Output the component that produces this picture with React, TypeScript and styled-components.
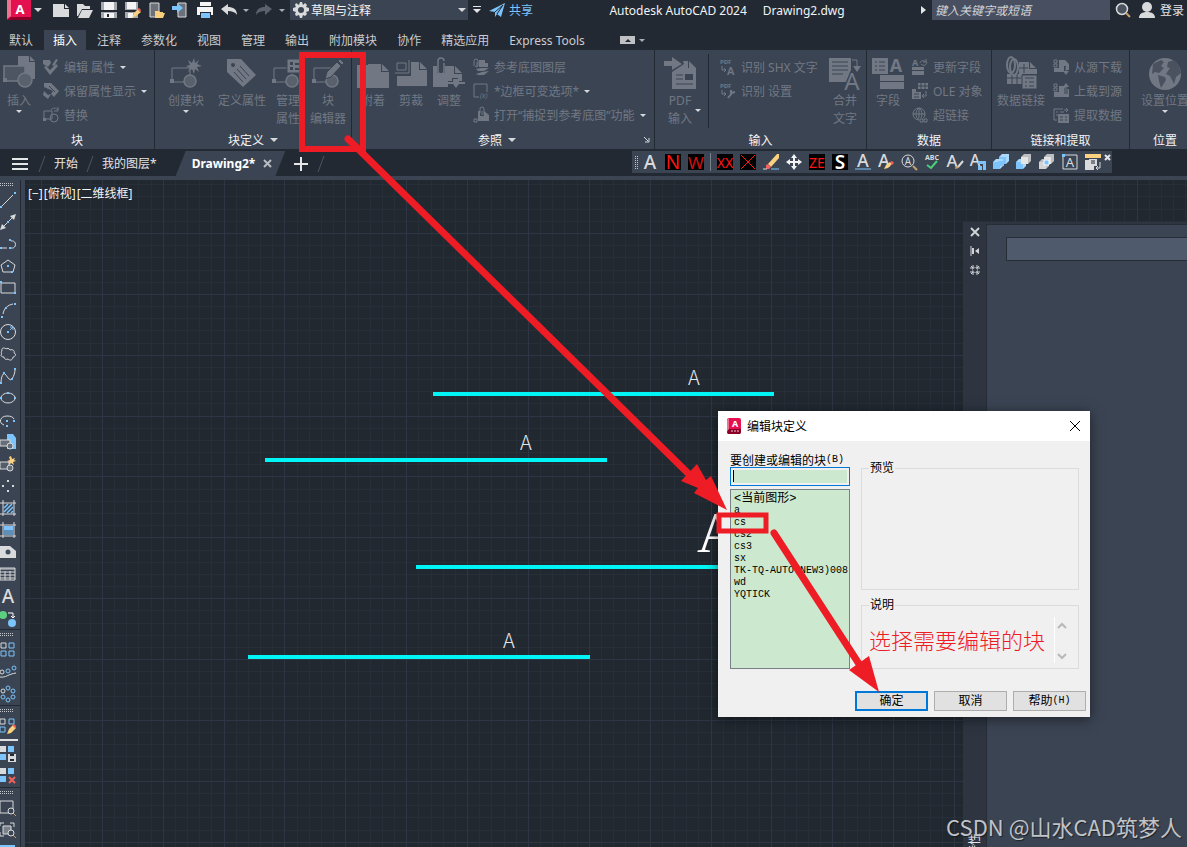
import React from "react";
import styled, { createGlobalStyle } from "styled-components";

const BG = "#222933";
const PANEL = "#3b4453";
const DIM = "#717883";
const LIGHT = "#d9dadb";
const BLUE = "#7cc4fb";
const RED = "#ee1c25";
const UI = `"Noto Sans", "Noto Sans CJK SC", sans-serif`;
const MONO = `"Liberation Mono", "Noto Sans CJK SC", monospace`;

const Global = createGlobalStyle`
  * { box-sizing: border-box; }
  html, body { margin: 0; height: 100%; background: ${BG}; }
  body { font-family: ${UI}; font-size: 12px; color: #e4e6e8; overflow: hidden; }
  button, input, select, textarea { font: inherit; color: inherit; margin: 0; }
  button { background: none; border: 0; padding: 0; white-space: nowrap; }
`;

const Shell = styled.div`
  position: relative;
  display: flex;
  flex-direction: column;
  height: 100vh;
  overflow: hidden;
`;

const Svg = styled.svg`
  display: block;
  flex: none;
  overflow: visible;
`;

const Caret = styled.span<{ $big?: boolean; $light?: boolean }>`
  flex: none;
  width: 0;
  height: 0;
  border-style: solid;
  border-color: ${(p) => (p.$light ? "#d6d8db" : "#a9adb3")} transparent transparent;
  border-width: ${(p) => (p.$big ? "4px 4px 0" : "3px 3px 0")};
`;

/* ---------- title bar ---------- */
const TitleBar = styled.header`
  display: flex;
  align-items: center;
  flex: none;
  height: 20px;
  margin-bottom: 10px;
  padding: 0 3px 0 7px;
`;
const Group = styled.div<{ $gap: number; $ml?: number }>`
  display: flex;
  align-items: center;
  gap: ${(p) => p.$gap}px;
  margin-left: ${(p) => p.$ml ?? 0}px;
`;
const IconButton = styled.button`
  display: flex;
  align-items: center;
  justify-content: center;
  flex: none;
  min-width: 8px;
  height: 20px;
`;
const Workspace = styled.label`
  display: flex;
  align-items: center;
  flex: none;
  width: 178px;
  height: 20px;
  margin-left: 4px;
  padding: 0 2px 0 3px;
  background: ${PANEL};
`;
const WorkspaceSelect = styled.select`
  flex: 1;
  min-width: 0;
  padding: 0 0 0 2px;
  border: 0;
  appearance: none;
  background: transparent;
  color: #f2f3f4;
`;
const Share = styled.button`
  display: flex;
  align-items: center;
  gap: 4px;
  margin-left: 8px;
  color: ${BLUE};
`;
const WindowTitle = styled.h1`
  display: flex;
  gap: 16px;
  margin: 0 auto;
  font-size: 12px;
  font-weight: 400;
  white-space: nowrap;
  color: #f2f3f4;
`;
const Search = styled.input`
  width: 178px;
  height: 20px;
  padding: 0 3px;
  border: 0;
  background: #474f60;
  font-style: italic;
  &::placeholder { color: #d3d6da; opacity: 1; }
`;

/* ---------- ribbon ---------- */
const Tabs = styled.nav`
  display: flex;
  flex: none;
  height: 20px;
`;
const Tab = styled.button<{ $active?: boolean }>`
  margin-right: 2px;
  padding: 0 9px;
  background: ${(p) => (p.$active ? PANEL : "transparent")};
  color: ${(p) => (p.$active ? "#fff" : "#c9ccd0")};
`;
const Ribbon = styled.div`
  display: flex;
  flex: none;
  overflow: hidden;
  background: ${PANEL};
`;
const Panel = styled.section<{ $w: number }>`
  display: flex;
  flex-direction: column;
  flex: none;
  width: ${(p) => p.$w}px;
  border-right: 1px solid ${BG};
  &:last-child { border-right: 0; }
`;
const PanelBody = styled.div<{ $pl?: number }>`
  display: flex;
  height: 80px;
  padding-left: ${(p) => p.$pl ?? 0}px;
  color: ${DIM};
`;
const PanelTitle = styled.div<{ $pr?: number }>`
  position: relative;
  display: flex;
  align-items: center;
  justify-content: center;
  gap: 6px;
  height: 19px;
  padding-right: ${(p) => p.$pr ?? 0}px;
  color: #f2f3f4;
`;
const Launcher = styled.button`
  position: absolute;
  right: 4px;
  top: 7px;
`;
const BigBtn = styled.button<{ $w: number; $ml?: string }>`
  display: flex;
  flex-direction: column;
  align-items: center;
  flex: none;
  width: ${(p) => p.$w}px;
  margin-left: ${(p) => p.$ml ?? "0"};
  padding-top: 6px;
  line-height: 18px;
`;
const BigLabel = styled.span`
  display: flex;
  align-items: center;
  margin-top: 4px;
`;
const SideCaretLabel = styled(BigLabel)`
  gap: 3px;
  padding-left: 9px;
`;
const SmallCol = styled.div<{ $ml: number }>`
  display: flex;
  flex-direction: column;
  align-items: flex-start;
  margin-left: ${(p) => p.$ml}px;
  padding-top: 5px;
`;
const SmallBtn = styled.button`
  display: flex;
  align-items: center;
  gap: 5px;
  height: 24px;
`;
const PanelRule = styled.div`
  width: 1px;
  height: 74px;
  margin: 4px 0 0 3px;
  background: ${BG};
`;

/* ---------- file tabs ---------- */
const FileBar = styled.div`
  display: flex;
  align-items: center;
  flex: none;
  height: 27px;
  padding: 2px 75px 0 12px;
`;
const FileTab = styled.button`
  line-height: 24px;
`;
const ActiveTab = styled.div`
  display: flex;
  align-items: center;
  gap: 8px;
  height: 25px;
  margin-left: 19px;
  padding: 0 13px 0 16px;
  background: ${PANEL};
  clip-path: polygon(10px 0, 100% 0, calc(100% - 10px) 100%, 0 100%);
  font-weight: 700;
  color: #fff;
`;
const TextTools = styled.div`
  display: flex;
  align-items: center;
  gap: 7px;
  height: 22px;
  margin: -3px 0 0 auto;
  padding-left: 3px;
  background: ${PANEL};
`;
const ToolRule = styled.span`
  width: 1px;
  height: 18px;
  margin: 0 -1px;
  background: #7b828d;
`;
const VGrip = styled.span`
  width: 3px;
  height: 13px;
  margin-right: -3px;
  background:
    linear-gradient(transparent 1px, ${PANEL} 1px) 0 0 / 100% 2px,
    linear-gradient(90deg, #c3c6ca 1px, transparent 1px) 0 0 / 2px 100%;
`;
const ToolClose = styled.button`
  width: 7px;
  height: 14px;
  margin-left: -3px;
`;

/* ---------- workspace ---------- */
const Work = styled.main`
  display: flex;
  flex: 1;
  min-height: 0;
  padding-top: 4px;
  background: ${PANEL};
`;
const ToolRail = styled.aside`
  flex: none;
  width: 25px;
  overflow: hidden;
`;
const ToolBlock = styled.div`
  display: flex;
  flex-direction: column;
  align-items: flex-start;
  width: 21px;
  padding-top: 3px;
  border: solid ${BG};
  border-width: 0 1px 1px 0;
`;
const HGrip = styled.span`
  width: 13px;
  height: 3px;
  margin-bottom: 3px;
  background:
    linear-gradient(transparent 1px, ${PANEL} 1px) 0 0 / 100% 2px,
    linear-gradient(90deg, #c3c6ca 1px, transparent 1px) 0 0 / 2px 100%;
`;
const RailBtn = styled.button`
  display: flex;
  align-items: center;
  width: 16px;
  height: 22px;
`;
const RailRule = styled.span`
  width: 18px;
  height: 2px;
  margin: 2px 0;
  background: #e0e0e0;
`;
const Canvas = styled.div`
  position: relative;
  flex: 1;
  min-width: 0;
  overflow: hidden;
  background: #212830;
`;
const Drawing = styled.svg`
  position: absolute;
  inset: 0;
  width: 100%;
  height: 100%;
`;
const ViewControls = styled.div`
  position: absolute;
  left: 3px;
  top: 5px;
  display: flex;
  gap: 1px;
  line-height: 18px;
  color: #f2f3f4;
`;
const Palette = styled.aside`
  position: absolute;
  right: 0;
  top: 42px;
  bottom: 0;
  display: flex;
  width: 224px;
  padding-top: 2px;
  background: #2e3541;
`;
const PaletteBar = styled.div`
  display: flex;
  flex-direction: column;
  align-items: center;
  gap: 9px;
  width: 23px;
  padding-top: 3px;
  overflow: hidden;
`;
const PaletteName = styled.span`
  margin: auto 0 -10px;
  writing-mode: vertical-rl;
  text-orientation: sideways;
  transform: rotate(180deg);
  line-height: 16px;
`;
const PaletteBody = styled.div`
  flex: 1;
  padding: 12px 0 0 19px;
  border: solid #262d37;
  border-width: 1px 0 0 1px;
  border-top-left-radius: 2px;
  background: ${PANEL};
`;
const PaletteInput = styled.input`
  display: block;
  width: 100%;
  height: 24px;
  border: 1px solid #262d37;
  border-right: 0;
  background: #4f5b6d;
`;

/* ---------- dialog ---------- */
const Dialog = styled.div`
  position: absolute;
  left: 718px;
  top: 411px;
  width: 372px;
  background: #f0f0f0;
  color: #000;
  box-shadow: 0 2px 12px rgba(0, 0, 0, 0.5);
`;
const DialogHead = styled.div`
  display: flex;
  align-items: center;
  gap: 6px;
  height: 30px;
  padding: 0 9px;
  background: #fff;
`;
const DialogTitle = styled.h2`
  flex: 1;
  margin: 0;
  font-size: 12px;
  font-weight: 400;
`;
const DialogGrid = styled.form`
  display: grid;
  grid-template-columns: 120px 1fr;
  column-gap: 11px;
  padding: 11px 11px 0 12px;
`;
const Column = styled.div`
  display: flex;
  flex-direction: column;
`;
const FieldLabel = styled.label`
  display: flex;
  align-items: center;
  height: 15px;
  white-space: nowrap;
`;
const Latin = styled.span`
  font-family: ${MONO};
  font-size: 10px;
`;
const NameInput = styled.input`
  height: 19px;
  margin-bottom: 3px;
  padding: 2px;
  border: 1px solid #0078d7;
  background: #fff linear-gradient(#cce8cf, #cce8cf) content-box;
  background-color: #fff;
  outline: 0;
`;
const NameBox = styled.div`
  position: relative;
  display: flex;
  flex-direction: column;
`;
const TextCursor = styled.span`
  position: absolute;
  left: 3px;
  top: 3px;
  width: 1px;
  height: 12px;
  background: #000;
`;
const BlockList = styled.select`
  height: 180px;
  padding: 0;
  border: 1px solid #7a8088;
  border-radius: 0;
  background: #cce8cf;
  font-family: ${MONO};
  font-size: 10px;
  overflow: hidden;
  outline: 0;
`;
const BlockOption = styled.option<{ $first?: boolean }>`
  display: flex;
  align-items: center;
  min-height: 0;
  height: ${(p) => (p.$first ? 14 : 12)}px;
  padding: 0 0 0 3px;
  font-size: ${(p) => (p.$first ? 12 : 10)}px;
  color: #000;
`;
const Frame = styled.fieldset<{ $h: number }>`
  display: flex;
  min-width: 0;
  height: ${(p) => p.$h}px;
  margin: 0;
  padding: 0 7px;
  border: 1px solid #dcdcdc;
`;
const Frames = styled(Column)`
  gap: 7px;
  padding-top: 8px;
`;
const Legend = styled.legend`
  padding: 0 1px;
  line-height: 16px;
`;
const Hint = styled.p`
  flex: 1;
  margin: 13px 0 0;
  font-family: "Noto Sans CJK SC", sans-serif;
  font-weight: 300;
  font-size: 22px;
  line-height: 26px;
  white-space: nowrap;
  color: ${RED};
`;
const Spin = styled.div`
  display: flex;
  flex-direction: column;
  justify-content: space-between;
  height: 46px;
  margin-top: 4px;
  padding: 6px 5px 4px 3px;
  border-left: 1px solid #fff;
`;
const Actions = styled.div`
  display: flex;
  justify-content: flex-end;
  gap: 6px;
  padding: 22px 4px 6px;
`;
const Action = styled.button<{ $primary?: boolean }>`
  display: flex;
  align-items: center;
  justify-content: center;
  width: 73px;
  height: 20px;
  border: ${(p) => (p.$primary ? "2px solid #0078d7" : "1px solid #adadad")};
  background: #e1e1e1;
  line-height: 16px;
`;

const Annotations = styled.svg`
  position: absolute;
  inset: 0;
  width: 100%;
  height: 100%;
  pointer-events: none;
`;
const Watermark = styled.div`
  position: absolute;
  right: 5px;
  bottom: 5px;
  font-family: "Noto Sans CJK SC", sans-serif;
  font-size: 22px;
  line-height: 32px;
  white-space: nowrap;
  color: #c0c3c7;
  text-shadow: 1px 1px 1px rgba(0, 0, 0, 0.5);
`;

/* ---------- drawings ---------- */
const I = ({ s = 16, children }: { s?: number; children: React.ReactNode }) => (
  <Svg width={s} height={s} viewBox={`0 0 ${s} ${s}`} fill="none" aria-hidden="true">
    {children}
  </Svg>
);

const Logo = () => (
  <Svg width="24" height="20" viewBox="0 0 24 20" aria-hidden="true">
    <path d="M0 0h24v20H0z" fill="#e51050" />
    <path d="M0 0h4v16l-4 3z" fill="#f4708f" />
    <path d="M0 20l4-3h20v3z" fill="#8a0029" />
    <text x="13" y="14" textAnchor="middle" fontFamily="Noto Sans, sans-serif" fontWeight="700" fontSize="13" fill="#fff">A</text>
  </Svg>
);
const DialogLogo = () => (
  <Svg width="14" height="16" viewBox="0 0 14 16" aria-hidden="true">
    <rect width="14" height="16" rx="2" fill="#e51050" />
    <path d="M0 2l2-2v11l-2 3z" fill="#f4708f" />
    <path d="M0 14l2-3h12v3l-1 2H1z" fill="#8a0029" />
    <text x="8" y="9" textAnchor="middle" fontFamily="Noto Sans, sans-serif" fontWeight="700" fontSize="9" fill="#fff">A</text>
    <path d="M4 13h2M7 13h2M10 13h2" stroke="#f3c9d4" />
  </Svg>
);

const shapes = (
  <>
    <path d="M2 12h18v14H2z" stroke={DIM} />
    <path d="M0 23h4v4H0z" fill={DIM} />
    <circle cx="20" cy="25" r="6" stroke={DIM} strokeWidth="1.500" fill="#59616d" />
  </>
);

const big = {
  insert: (
    <I s={32}>
      <path d="M15 0h11v6h6v17H15z" fill={DIM} />
      <path d="M27 0l5 5h-5z" fill={DIM} />
      <path d="M1 10h21v15H1z" stroke={DIM} strokeWidth="1.500" fill="#4d5562" />
      <path d="M0 22h4v4H0z" fill={DIM} />
      <circle cx="22" cy="24" r="7" stroke={DIM} strokeWidth="1.500" fill="#59616d" />
    </I>
  ),
  create: (
    <I s={32}>
      {shapes}
      <path d="M24 2l1 5 4-3-2 4 5 2-5 1 2 5-4-3-1 5-2-5-4 3 2-4-4-2 4-1-2-5 4 3z" fill={DIM} />
    </I>
  ),
  tag: (
    <I s={32}>
      <path d="M1 3h14l15 16-13 12L1 16z" fill={DIM} />
      <circle cx="7" cy="9" r="2" fill={PANEL} />
      <path d="M14 10l9 10M11 13l9 10M8 16l9 10" stroke={PANEL} />
    </I>
  ),
  manage: (
    <I s={32}>
      {shapes}
      <path d="M15 3h17v14H15z" fill={DIM} stroke={PANEL} />
      <path d="M18 6h3v3h-3zM23 7h7v2h-7zM18 11h3v3h-3zM23 12h7v2h-7z" fill={PANEL} />
    </I>
  ),
  editor: (
    <I s={32}>
      {shapes}
      <path d="M13 23l2-7L25 6l4 4-10 11zM26 5l2-2 4 4-2 2z" fill={DIM} stroke={PANEL} />
    </I>
  ),
  attach: (
    <I s={32}>
      <path d="M0 9h11V8h13v8h8v16H0zM25 8l7 7h-7z" fill={DIM} />
    </I>
  ),
  clip: (
    <I s={32}>
      <path d="M16 6h8v8h8v16H2V20h14zM25 6l7 7h-7z" fill={DIM} />
      <path d="M0 17h14V4M2 14V7h9v7z" stroke={DIM} />
    </I>
  ),
  adjust: (
    <I s={32}>
      <path d="M0 10h4v7h8v-7h9v8h8v7h-4v-3h-6v3h-4v6H0zM22 10l7 7h-7z" fill={DIM} />
      <path d="M11 7v8a3 3 0 01-6 0V5a3 3 0 016 0" stroke={DIM} strokeWidth="1.500" />
      <path d="M14 27h18" stroke={DIM} strokeWidth="2" />
      <path d="M20 23h6v5l-3 4-3-4z" fill={DIM} />
    </I>
  ),
  pdf: (
    <I s={32}>
      <path d="M0 5h8V1l10 7-10 6v-4H0z" fill={DIM} />
      <path d="M8 33V16l12-8-1-3h5v7h8v21zM25 5l7 7h-7z" fill={DIM} />
      <path d="M12 19h7M12 23h7M12 28h17" stroke={PANEL} />
      <path d="M21 18h8v6h-8z" fill={PANEL} />
    </I>
  ),
  combine: (
    <I s={32}>
      <path d="M0 2h22v12l-5 12H0z" fill={DIM} />
      <path d="M3 6h16M3 10h16M3 14h16M3 18h11" stroke={PANEL} />
      <path d="M23 4h5v7" stroke={DIM} />
      <path d="M24 10h8l-4 6z" fill={DIM} />
      <text x="23" y="34" textAnchor="middle" fontFamily="Noto Sans, sans-serif" fontSize="24" fill={DIM} stroke={PANEL} strokeWidth="2" paintOrder="stroke">A</text>
    </I>
  ),
  field: (
    <I s={32}>
      <path d="M0 2h16v16H0zM8 19h24v6H8zM8 26h24v7H8z" fill={DIM} />
      <path d="M3 6h2M7 6h6M3 10h2M7 10h6M3 14h2M7 14h6" stroke={PANEL} />
      <text x="24" y="16" textAnchor="middle" fontFamily="Noto Sans, sans-serif" fontWeight="700" fontSize="18" fill={DIM}>A</text>
    </I>
  ),
  link: (
    <I s={32}>
      <path d="M2 18h12V6h10v7h8v5H17v10H2zM25 6l6 6h-6z" fill={DIM} />
      <path d="M2 22h14M7 18v10M12 18v10M19 8v9M14 12h9" stroke={PANEL} />
      <path d="M17 19h15v14H17z" fill={DIM} stroke={PANEL} />
      <path d="M20 22h9M20 26h2M24 26h5M20 30h2M24 30h5" stroke={PANEL} />
      <ellipse cx="6" cy="9" rx="4" ry="8" stroke={DIM} strokeWidth="2" />
      <ellipse cx="9" cy="11" rx="4" ry="8" stroke={DIM} strokeWidth="2" />
    </I>
  ),
  globe: (
    <I s={32}>
      <circle cx="16" cy="18" r="16" fill={DIM} />
      <path d="M4 8l8-4 3 2-3 4 3 2-5 5-4-1-3 2zM9 19l7 2 1 3-5 8-2-7zM19 6l6-2 5 6 2 7-5 4-2 7-4-8-4-2 4-6-3-1z" fill="#4a5260" />
    </I>
  ),
};

const sm = {
  editAttr: (
    <I>
      <path d="M0 1h7l1 3-3 4-5-3z" fill={DIM} />
      <path d="M1 8l2-1 4 4 6-6 2 2-8 9zM9 6l4-6 2 1-4 6z" fill={DIM} />
    </I>
  ),
  keepAttr: (
    <I>
      <path d="M1 0h7l8 8-5 6-3-3 2-3-9-4zM1 8l4 4 3-1-3 5-5-4z" fill={DIM} />
      <path d="M6 3l6 6" stroke={PANEL} />
    </I>
  ),
  replace: (
    <I>
      <path d="M1 4h8v8H1zM8 3c2-3 5-2 7 0M15 0v4h-4" stroke={DIM} />
      <circle cx="11" cy="11" r="4" stroke={DIM} />
      <path d="M0 11h3v3H0z" fill={DIM} />
    </I>
  ),
  layers: (
    <I>
      <path d="M6 1h6v3h3v4H6zM3 10l5-1h8l-5 3H5zM3 15l6-2 7-1-5 4H5z" fill={DIM} />
      <path d="M4 3v5M1 7V2a2 2 0 014 0v5a2 2 0 01-3 0" stroke={DIM} />
    </I>
  ),
  frame: (
    <I>
      <path d="M6 14H1V1h13v8" stroke={DIM} />
      <text x="7" y="15" fontFamily="Noto Sans, sans-serif" fontStyle="italic" fontSize="7" fill={DIM}>(x)</text>
    </I>
  ),
  snap: (
    <I>
      <path d="M5 4h2v5h4V4l5 4v6H5z" fill={DIM} />
      <path d="M9 4v4M7 6V2a2 2 0 014 0v6M1 12h3v3H1z" stroke={DIM} />
    </I>
  ),
  shx: (
    <I>
      <text x="0" y="5" fontFamily="Noto Sans, sans-serif" fontWeight="700" fontSize="6" fill={DIM}>PDF</text>
      <path d="M2 7v4h4M4 9l2 2-2 2" stroke={DIM} />
      <text x="7" y="16" fontFamily="Noto Sans, sans-serif" fontWeight="600" fontSize="11" fill={DIM}>A</text>
    </I>
  ),
  shxSet: (
    <I>
      <text x="0" y="5" fontFamily="Noto Sans, sans-serif" fontWeight="700" fontSize="6" fill={DIM}>PDF</text>
      <path d="M2 7v4h4M4 9l2 2-2 2" stroke={DIM} />
      <path d="M8 15l4-5M11 7v3l4-1" stroke={DIM} strokeWidth="2" />
    </I>
  ),
  updField: (
    <I>
      <text x="0" y="7" fontFamily="Noto Sans, sans-serif" fontWeight="700" fontSize="9" fill={DIM}>A</text>
      <path d="M8 4c1-3 4-3 6-1M15 3c-1 4-4 4-6 2M14 0v3h-3" stroke={DIM} />
      <path d="M0 8h12v3H0zM0 12h12v4H0z" fill={DIM} />
    </I>
  ),
  ole: (
    <I>
      <path d="M6 0h10v6H6zM0 6h4v3h5v7H0z" fill={DIM} />
      <path d="M6 3h10M9 0v6M13 0v6M2 11h5M2 14h5" stroke={PANEL} />
      <path d="M14 8v5h-4M12 11l-2 2 2 2" stroke={DIM} />
    </I>
  ),
  hyper: (
    <I>
      <circle cx="7" cy="7" r="6" stroke={DIM} />
      <path d="M1 7h12M7 1v12M7 1C3 4 3 10 7 13M7 1c4 3 4 9 0 12" stroke={DIM} />
      <path d="M7 11h9v4H7z" fill={PANEL} />
      <path d="M8 12h3v3H8zM12 12h3v3h-3z" stroke={DIM} />
    </I>
  ),
  down: (
    <I>
      <path d="M6 1h6l4 4v6h-3V7h-2v6H1V9h5z" fill={DIM} />
      <path d="M1 1h3v3H1zM1 5h3v3H1zM13 8v5" stroke={DIM} />
      <path d="M10 12h6l-3 4z" fill={DIM} />
    </I>
  ),
  up: (
    <I>
      <path d="M6 3h6v3h4v8H1V9h5z" fill={DIM} />
      <path d="M1 1h3v3H1zM1 5h3v3H1z" stroke={DIM} />
      <path d="M13 11V5" stroke={PANEL} strokeWidth="3" />
      <path d="M13 11V4" stroke={DIM} />
      <path d="M10 4h6l-3-4z" fill={DIM} />
    </I>
  ),
  extract: (
    <I>
      <path d="M10 2H1v11h3M3 5h2M7 5h4M3 8h2M11 3h4M13 1l2 2-2 2" stroke={DIM} />
      <path d="M5 7h11v9H5z" fill={DIM} />
      <path d="M7 10h3M12 10h2M7 13h3M12 13h2" stroke={PANEL} />
    </I>
  ),
};

const qat = {
  new: <I><path d="M0 2h11v5h5v8H0zM12 2l4 4h-4z" fill={LIGHT} /></I>,
  open: <I><path d="M0 2h6l2 2h5v3H5L1 14H0zM5 8h11l-4 8H1z" fill={LIGHT} /></I>,
  save: (
    <I>
      <path d="M0 0h16v16H0z" fill="#a6a9ad" />
      <path d="M3 0h10v8H3zM3 11h10v5H3z" fill="#f4f4f4" />
      <path d="M0 9h16M7 12v3" stroke={BG} strokeWidth="2" />
    </I>
  ),
  saveAs: (
    <I>
      <path d="M0 0h13v16H0z" fill="#a6a9ad" />
      <path d="M2 0h9v7H2zM3 11h5v5H3z" fill="#f4f4f4" />
      <path d="M0 9h12" stroke={BG} strokeWidth="2" />
      <path d="M7 16l2-5 4-4 3 3-5 4z" fill="#fbd180" />
      <path d="M12 7l2-1 2 2-1 2z" fill="#f0625b" />
    </I>
  ),
  mobOpen: (
    <I>
      <path d="M1 1h9v14H1z" stroke={LIGHT} fill="#6c7078" />
      <path d="M6 9h4l1 1h3v1h2l-2 5H6z" fill="#f9cf7e" />
    </I>
  ),
  mobSave: (
    <I>
      <path d="M5 1h8v14H5z" stroke={LIGHT} fill="#6c7078" />
      <path d="M-1 4h5V1l6 5-6 5V8h-5z" fill={BLUE} />
    </I>
  ),
  print: (
    <I>
      <path d="M3 0h11v4H3zM0 5h16v8h-2v-3H3v3H0z" fill="#f4f4f4" />
      <path d="M4 11h9v5H4z" fill={BLUE} />
    </I>
  ),
  undo: <I><path d="M0 7l7-5v3c5 0 9 2 9 8-2-3-5-4-9-4v4z" fill={LIGHT} /></I>,
  redo: <I><path d="M16 7L9 2v3C4 5 0 7 0 13c2-3 5-4 9-4v4z" fill="#5b626d" /></I>,
};

const gear = (
  <I>
    <path d="M7 0h2l1 3 2-2 2 2-1 2 3 1v3l-3 1 1 2-2 2-2-1-1 3H7l-1-3-3 1-1-2 1-2-3-1V6l3-1-1-2 1-2 3 2z" fill={LIGHT} />
    <circle cx="8" cy="8" r="3" fill={PANEL} />
  </I>
);

type GlyphProps = { t: string; bg?: string; c?: string; size?: number; w?: number; y?: number; x?: number };
const Glyph = ({ t, bg, c = LIGHT, size = 19, w = 400, y = 15, x = 8 }: GlyphProps) => (
  <>
    {bg && <path d="M0 0h16v16H0z" fill={bg} />}
    <text x={x} y={y} textAnchor="middle" fontFamily="Noto Sans, sans-serif" fontWeight={w} fontSize={size} fill={c}>{t}</text>
  </>
);

const cube = (x: number, y: number, f: string, top: string) => (
  <>
    <path d={`M${x} ${y + 3}l3-3h7v7l-3 3h-7z`} fill={top} />
    <path d={`M${x} ${y + 3}h7v7h-7z`} fill={f} />
  </>
);

const textTools: [string, React.ReactNode][] = [
  ["多行文字", <Glyph t="A" w={500} size={19} />],
  ["N", <Glyph t="N" bg="#000" c="#ff1414" size={19} />],
  ["W", <Glyph t="W" bg="#000" c="#d01010" size={17} />],
  ["|", null],
  ["XX", <Glyph t="XX" bg="#000" c="#ff1414" size={14} y={14} />],
  ["X", <><path d="M0 0h16v16H0z" fill="#000" /><path d="M1 1l14 14M15 1L1 15" stroke="#ff1414" /></>],
  ["删除", <><path d="M5 10L14 0h2v4l-8 9z" fill="#fbd180" /><path d="M3 11l2-1 3 3-2 2H3z" fill="#f0625b" /><path d="M0 15h4" stroke={LIGHT} /><path d="M8 15h8" stroke={BLUE} /></>],
  ["移动", <path d="M8 0l3 4H9v3h3V5l4 3-4 3V9H9v3h2l-3 4-3-4h2V9H4v2L0 8l4-3v2h3V4H5z" fill="#f4f4f4" />],
  ["ZE", <Glyph t="ZE" bg="#000" c="#ff1414" size={14} y={14} />],
  ["S", <Glyph t="S" bg="#000" c="#fff" w={600} size={19} />],
  ["文字下划线", <><Glyph t="A" w={500} size={18} y={13} /><path d="M0 15h16" stroke={BLUE} /></>],
  ["编辑文字", <><Glyph t="A" w={500} size={18} y={13} x={6} /><path d="M6 15l2-4 4-3 2 2-4 4z" fill="#fbd180" /><path d="M12 8l2-1 2 2-2 2z" fill="#f0625b" /></>],
  ["查找文字", <><circle cx="7" cy="7" r="6" stroke={LIGHT} /><Glyph t="A" size={10} y={11} x={7} /><path d="M12 12l4 4" stroke="#c8a06a" strokeWidth="2" /></>],
  ["拼写检查", <><Glyph t="ABC" w={700} size={7} y={6} /><path d="M3 11l4 3 6-7" stroke="#46d27c" strokeWidth="2" /></>],
  ["文字样式", <><Glyph t="A" w={500} size={17} y={13} x={5} /><path d="M16 7l-5 6" stroke={LIGHT} strokeWidth="2" /><path d="M8 15c0-2 1-3 3-3l1 2z" fill="#c8a06a" /></>],
  ["缩放文字", <><Glyph t="A" w={500} size={16} y={12} x={5} /><path d="M8 7h8v9h-3v-6H8zM8 12h4v4H8z" fill={BLUE} /></>],
  ["并集", <>{cube(6, 0, BLUE, "#a9d8fb")}{cube(0, 5, BLUE, "#a9d8fb")}<path d="M5 7h6v5H5z" fill={BLUE} /></>],
  ["差集", <>{cube(0, 5, BLUE, "#a9d8fb")}{cube(5, 0, "#e4e4e4", "#bcbec1")}</>],
  ["交集", <>{cube(5, 0, "#e4e4e4", "#bcbec1")}{cube(0, 5, "#d4d4d4", "#bcbec1")}<path d="M5 6h5v5H5z" fill={BLUE} stroke="#fff" /></>],
  ["文字框", <><path d="M1 1h14v14H1z" stroke={LIGHT} /><path d="M0 0h3v3H0z" fill={BLUE} /><Glyph t="A" size={13} y={13} /></>],
  ["测量", <><path d="M0 0h16v4H0z" fill="#fbd180" /><path d="M0 6h4v10H0zM4 5h8v7H4zM1 12h8v4H1z" fill={LIGHT} /><path d="M6 7h4M6 9h4" stroke="#222933" /><path d="M15 8v6h-4M13 12l-2 2 2 2" stroke={LIGHT} /></>],
];

const dot = (x: number, y: number) => <path d={`M${x} ${y}h2v2h-2z`} fill={BLUE} />;
const ring = (x: number, y: number, c = BLUE) => <circle cx={x} cy={y} r="2" stroke={c} />;

const rail1: [string, React.ReactNode][] = [
  ["直线", <><path d="M2 14L13 3" stroke={LIGHT} />{dot(0, 14)}{dot(14, 0)}</>],
  ["构造线", <><path d="M3 13L13 3" stroke={LIGHT} /><path d="M10 2l6-2-2 6zM6 14l-6 2 2-6z" fill={LIGHT} />{dot(7, 7)}</>],
  ["多段线", <><path d="M2 12h5M11 12c6 1 6-8 0-7" stroke={LIGHT} />{dot(0, 11)}{dot(9, 11)}{dot(9, 3)}</>],
  ["多边形", <><path d="M8 2l7 5-2 7H3L1 7z" stroke={LIGHT} />{dot(7, 7)}{dot(11, 13)}</>],
  ["矩形", <><path d="M1 3h14v10H1z" stroke={LIGHT} />{dot(0, 1)}{dot(14, 12)}</>],
  ["圆弧", <><path d="M3 12C4 6 8 3 13 2" stroke={LIGHT} />{dot(1, 14)}{dot(5, 5)}{dot(14, 1)}</>],
  ["圆", <><circle cx="8" cy="8" r="7.500" stroke={LIGHT} /><path d="M10 6l3-3M10 3h3v3" stroke={BLUE} />{dot(7, 7)}</>],
  ["修订云线", <path d="M2 5c-1-3 2-4 4-2 1-1 3-1 4 1 3-1 5 1 4 3 3 1 1 4-1 4 0 3-3 4-5 2-2 1-4 0-4-2-3 0-4-2-2-3-1-1-1-2 0-3z" stroke={LIGHT} />],
  ["样条曲线", <><path d="M1 14C1 10 3 4 5 6s5 8 7 5 3-7 3-9" stroke={LIGHT} />{dot(0, 14)}{dot(3, 4)}{dot(11, 10)}{dot(14, 0)}</>],
  ["椭圆", <><ellipse cx="8" cy="8" rx="7" ry="5" stroke={LIGHT} />{dot(0, 7)}{dot(7, 2)}{dot(14, 7)}</>],
  ["椭圆弧", <><path d="M4 13C-2 11 0 4 7 4c4 0 6 1 7 3" stroke={LIGHT} />{dot(6, 8)}{dot(13, 8)}{dot(6, 13)}</>],
  ["插入块", <><path d="M7 0h6l3 4v11H7z" fill={BLUE} /><path d="M0 6h10v6H0z" stroke={LIGHT} fill="#666e79" /><circle cx="10" cy="12" r="3" stroke={LIGHT} fill="#666e79" /></>],
  ["创建块", <><path d="M0 6h9v7H0z" stroke={LIGHT} fill="#555d69" /><circle cx="10" cy="12" r="3" stroke={LIGHT} fill="#666e79" /><path d="M11 0l1 3 3-1-1 2 2 1-3 1 1 3-3-2-2 2v-3L7 5l3-1-1-3z" fill="#fbd180" /></>],
  ["点", <path d="M7 2h2v2H7zM2 7h2v2H2zM12 7h2v2h-2zM7 12h2v2H7z" fill={LIGHT} />],
  ["图案填充", <><path d="M3 0v16M14 0v16M0 3h16M0 14h16" stroke={LIGHT} /><path d="M4 8l4-4M4 12l8-8M7 13l6-6M11 13l2-2" stroke={BLUE} strokeWidth="1.500" /></>],
  ["渐变色", <><path d="M4 4h9v9H4z" fill="#5e8fb8" /><path d="M4 4h9v4H4z" fill={BLUE} /><path d="M3 0v16M14 0v16M0 3h16M0 14h16" stroke={LIGHT} /></>],
  ["面域", <><path d="M0 2h10l6 5v7H0z" fill={LIGHT} /><circle cx="8" cy="8" r="2.500" fill="#3c4c60" /></>],
  ["表格", <path d="M0 2h15v12H0zM0 6h15M0 9h15M0 12h15M5 5v9M10 5v9M0 3h15" stroke={LIGHT} />],
  ["文字", <Glyph t="A" w={500} size={19} />],
  ["添加选定对象", <><circle cx="3" cy="5" r="4" fill="#5bd07f" /><circle cx="12" cy="13" r="4" fill={BLUE} /><path d="M8 3h5v5M11 6l2 2 2-2" stroke="#fff" /></>],
];
const rail2: [string, React.ReactNode][] = [
  ["矩形阵列", <><path d="M1 1h5v5H1z" stroke={LIGHT} /><path d="M9 1h5v5H9zM1 9h5v5H1zM9 9h5v5H9z" stroke={BLUE} /></>],
  ["路径阵列", <><path d="M0 13c6 1 8-3 16-4" stroke={LIGHT} />{ring(2, 8, LIGHT)}{ring(8, 7)}{ring(14, 4)}</>],
  ["环形阵列", <>{ring(8, 2)}{ring(13, 5)}{ring(13, 11)}{ring(8, 14)}{ring(3, 11)}{ring(3, 5, LIGHT)}</>],
];
const rail3: [string, React.ReactNode][] = [
  ["编辑阵列", <><path d="M0 1h5v5H0z" stroke={LIGHT} /><path d="M9 1h5v5H9zM0 9h5v5H0z" stroke={BLUE} /><path d="M7 16l2-5 4-4 3 3-5 5z" fill="#fbd180" /><path d="M12 7l2-1 2 2-1 2z" fill="#f0625b" /></>],
  ["|", null],
  ["保存阵列", <><path d="M0 0h6v6H0z" fill={LIGHT} /><path d="M8 0h6v6H8zM0 8h6v6H0z" fill={BLUE} /><path d="M8 8h8v8H8z" fill={LIGHT} /><path d="M10 9h4M10 14h4" stroke="#222933" strokeWidth="2" /></>],
  ["关闭阵列", <><path d="M0 0h6v6H0z" fill={LIGHT} /><path d="M8 0h6v6H8zM0 8h6v6H0z" fill={BLUE} /><path d="M9 9l6 6M15 9l-6 6" stroke="#f0625b" strokeWidth="2" /></>],
];
const rail4: [string, React.ReactNode][] = [
  ["窗口缩放", <><path d="M0 1h13v12H0z" stroke={LIGHT} /><circle cx="11" cy="11" r="3" stroke={LIGHT} fill={PANEL} /><path d="M13 13l3 3" stroke="#c8a06a" /></>],
  ["范围缩放", <><path d="M0 4V1h4M10 1h4v4M0 10v4h4" stroke={LIGHT} /><path d="M3 4h8v8H3z" stroke={LIGHT} fill="#7b818a" /><circle cx="11" cy="11" r="3" stroke={LIGHT} fill={PANEL} /><path d="M13 13l3 3" stroke="#c8a06a" /></>],
  ["缩放", <path d="M1 2h13v12H1z" stroke={BLUE} strokeWidth="2" />],
];

const Rail = ({ items }: { items: [string, React.ReactNode][] }) => (
  <ToolBlock>
    <HGrip />
    {items.map(([name, art]) =>
      art ? (
        <RailBtn key={name} aria-label={name}><I>{art}</I></RailBtn>
      ) : (
        <RailRule key={name} />
      ),
    )}
  </ToolBlock>
);

type BigProps = { icon: React.ReactNode; lines: string[]; w: number; ml?: string; caret?: boolean };
const Big = ({ icon, lines, w, ml, caret }: BigProps) => (
  <BigBtn $w={w} $ml={ml}>
    {icon}
    <BigLabel>
      <span>{lines.map((l, i) => <React.Fragment key={l}>{i > 0 && <br />}{l}</React.Fragment>)}</span>
    </BigLabel>
    {caret && <Caret $light />}
  </BigBtn>
);
const Small = ({ icon, label, caret }: { icon: React.ReactNode; label: string; caret?: boolean }) => (
  <SmallBtn>{icon}<span>{label}</span>{caret && <Caret $light />}</SmallBtn>
);
const Slash = () => (
  <Svg width="8" height="16" viewBox="0 0 8 16" aria-hidden="true"><path d="M1 16L7 0" stroke="#4d5563" /></Svg>
);

const MAJOR = 60.87;
const grid = (minor: boolean) => {
  const step = minor ? MAJOR / 5 : MAJOR;
  let d = "";
  for (let i = 0; i < (minor ? 240 : 48); i++) {
    const x = Math.round(16 - MAJOR + i * step);
    const y = Math.round(53 - MAJOR + i * step);
    d += `M${x} 0h1v3000h-1zM0 ${y}h3000v1H0z`;
  }
  return d;
};

const tabs = ["默认", "插入", "注释", "参数化", "视图", "管理", "输出", "附加模块", "协作", "精选应用", "Express Tools"];
const blocks = ["<当前图形>", "a", "cs", "cs2", "cs3", "sx", "TK-TQ-AUTO(NEW3)008", "wd", "YQTICK"];
const names = ["新建", "打开", "保存", "另存为", "从移动设备打开", "保存到移动设备", "打印", "放弃"];
const qatIcons = [qat.new, qat.open, qat.save, qat.saveAs, qat.mobOpen, qat.mobSave, qat.print, qat.undo];

export default function App() {
  return (
    <Shell>
      <Global />
      <TitleBar>
        <Logo />
        <Group $gap={0} $ml={3}><IconButton aria-label="应用程序菜单"><Caret $big $light /></IconButton></Group>
        <Group $gap={8} $ml={11}>
          {qatIcons.map((ic, i) => <IconButton key={names[i]} aria-label={names[i]}>{ic}</IconButton>)}
        </Group>
        <Group $gap={6} $ml={5}>
          <IconButton aria-label="放弃列表"><Caret /></IconButton>
          <IconButton aria-label="重做">{qat.redo}</IconButton>
          <IconButton aria-label="重做列表"><Caret /></IconButton>
        </Group>
        <Workspace>
          {gear}
          <WorkspaceSelect aria-label="工作空间"><option>草图与注释</option></WorkspaceSelect>
          <Caret $big $light />
        </Workspace>
        <Group $gap={0} $ml={5}>
          <IconButton aria-label="自定义快速访问工具栏">
            <Svg width="8" height="8" viewBox="0 0 8 8"><path d="M0 0h8v1H0zM0 3h8L4 7z" fill="#e4e6e8" /></Svg>
          </IconButton>
        </Group>
        <Share>
          <I><path d="M0 9L16 1l-4 14-4-3-2 3v-5z" fill={BLUE} /><path d="M6 10l8-7-6 9" stroke={BG} /></I>
          共享
        </Share>
        <WindowTitle><span>Autodesk AutoCAD 2024</span><span>Drawing2.dwg</span></WindowTitle>
        <Svg width="5" height="8" viewBox="0 0 5 8"><path d="M0 0l5 4-5 4z" fill="#e4e6e8" /></Svg>
        <Group $gap={5} $ml={6}>
          <Search aria-label="搜索" placeholder="键入关键字或短语" />
          <IconButton aria-label="开始搜索">
            <I><circle cx="7" cy="7" r="5.500" stroke={LIGHT} strokeWidth="1.500" fill="#4b535f" /><path d="M11 11l4 4" stroke="#c8a06a" strokeWidth="2" /></I>
          </IconButton>
        </Group>
        <Group $gap={5} $ml={8}>
          <I><circle cx="8" cy="5" r="5" fill={LIGHT} /><path d="M0 16c0-4 3-6 8-6s8 2 8 6z" fill={LIGHT} /></I>
          <IconButton>登录</IconButton>
        </Group>
      </TitleBar>

      <Tabs>
        {tabs.map((t) => <Tab key={t} $active={t === "插入"}>{t}</Tab>)}
        <Group $gap={4} $ml={24}>
          <IconButton aria-label="最小化功能区">
            <Svg width="15" height="8" viewBox="0 0 15 8"><path d="M0 0h15v8H0z" fill="#bfc1c4" /><path d="M5 6l3-3 3 3z" fill={BG} /></Svg>
          </IconButton>
          <Caret />
        </Group>
      </Tabs>

      <Ribbon>
        <Panel $w={155}>
          <PanelBody>
            <Big icon={big.insert} lines={["插入"]} w={38} caret />
            <SmallCol $ml={5}>
              <Small icon={sm.editAttr} label="编辑 属性" caret />
              <Small icon={sm.keepAttr} label="保留属性显示" caret />
              <Small icon={sm.replace} label="替换" />
            </SmallCol>
          </PanelBody>
          <PanelTitle>块</PanelTitle>
        </Panel>
        <Panel $w={197}>
          <PanelBody $pl={5}>
            <Big icon={big.create} lines={["创建块"]} w={52} caret />
            <Big icon={big.tag} lines={["定义属性"]} w={60} />
            <Big icon={big.manage} lines={["管理", "属性"]} w={32} />
            <Big icon={big.editor} lines={["块", "编辑器"]} w={40} ml="4px" />
          </PanelBody>
          <PanelTitle>块定义<Caret $big $light /></PanelTitle>
        </Panel>
        <Panel $w={303}>
          <PanelBody $pl={2}>
            <Big icon={big.attach} lines={["附着"]} w={38} />
            <Big icon={big.clip} lines={["剪裁"]} w={38} />
            <Big icon={big.adjust} lines={["调整"]} w={38} />
            <SmallCol $ml={5}>
              <Small icon={sm.layers} label="参考底图图层" />
              <Small icon={sm.frame} label="*边框可变选项*" caret />
              <Small icon={sm.snap} label="打开“捕捉到参考底图”功能" caret />
            </SmallCol>
          </PanelBody>
          <PanelTitle $pr={12}>
            参照<Caret $big $light />
            <Launcher aria-label="外部参照">
              <Svg width="6" height="6" viewBox="0 0 6 6"><path d="M0 0l4 4M5 1v4H1" stroke={LIGHT} fill="none" /></Svg>
            </Launcher>
          </PanelTitle>
        </Panel>
        <Panel $w={212}>
          <PanelBody>
            <BigBtn $w={50}>
              {big.pdf}
              <SideCaretLabel><span>PDF<br />输入</span><Caret $light /></SideCaretLabel>
            </BigBtn>
            <PanelRule />
            <SmallCol $ml={11}>
              <Small icon={sm.shx} label="识别 SHX 文字" />
              <Small icon={sm.shxSet} label="识别 设置" />
            </SmallCol>
            <Big icon={big.combine} lines={["合并", "文字"]} w={42} ml="auto" />
          </PanelBody>
          <PanelTitle>输入</PanelTitle>
        </Panel>
        <Panel $w={125}>
          <PanelBody>
            <Big icon={big.field} lines={["字段"]} w={42} />
            <SmallCol $ml={3}>
              <Small icon={sm.updField} label="更新字段" />
              <Small icon={sm.ole} label="OLE 对象" />
              <Small icon={sm.hyper} label="超链接" />
            </SmallCol>
          </PanelBody>
          <PanelTitle>数据</PanelTitle>
        </Panel>
        <Panel $w={138}>
          <PanelBody>
            <Big icon={big.link} lines={["数据链接"]} w={58} />
            <SmallCol $ml={3}>
              <Small icon={sm.down} label="从源下载" />
              <Small icon={sm.up} label="上载到源" />
              <Small icon={sm.extract} label="提取数据" />
            </SmallCol>
          </PanelBody>
          <PanelTitle>链接和提取</PanelTitle>
        </Panel>
        <Panel $w={70}>
          <PanelBody><Big icon={big.globe} lines={["设置位置"]} w={70} caret /></PanelBody>
          <PanelTitle>位置</PanelTitle>
        </Panel>
      </Ribbon>

      <FileBar>
        <IconButton aria-label="菜单">
          <I><path d="M0 3h16M0 8h16M0 13h16" stroke="#e4e6e8" strokeWidth="2" /></I>
        </IconButton>
        <Group $gap={8} $ml={10}>
          <Slash /><FileTab>开始</FileTab><Slash /><FileTab>我的图层*</FileTab>
        </Group>
        <ActiveTab>
          Drawing2*
          <IconButton aria-label="关闭">
            <Svg width="9" height="9" viewBox="0 0 9 9"><path d="M1 1l7 7M8 1L1 8" stroke="#b9bcc1" strokeWidth="2" /></Svg>
          </IconButton>
        </ActiveTab>
        <Group $gap={8} $ml={8}>
          <IconButton aria-label="新图形"><I><path d="M1 8h14M8 1v14" stroke="#e4e6e8" strokeWidth="2" /></I></IconButton>
          <Slash />
        </Group>
        <TextTools>
          <VGrip />
          {textTools.map(([n, art]) =>
            art ? <IconButton key={n} aria-label={n}><I>{art}</I></IconButton> : <ToolRule key={n} />,
          )}
          <ToolClose aria-label="关闭工具栏">
            <Svg width="6" height="14" viewBox="0 0 6 14"><path d="M0 0l5 5M5 0L0 5" stroke="#e4e6e8" strokeWidth="2" /></Svg>
          </ToolClose>
        </TextTools>
      </FileBar>

      <Work>
        <ToolRail>
          <Rail items={rail1} />
          <Rail items={rail2} />
          <Rail items={rail3} />
          <Rail items={rail4} />
        </ToolRail>
        <Canvas>
          <Drawing>
            <path d={grid(true)} fill="#262e38" />
            <path d={grid(false)} fill="#2e3545" />
            <path d="M408 214h341M240 280h342M391 387h302M223 477h342" stroke="#00f6f6" strokeWidth="4" />
            <g fill="#e4e6e8" fontFamily="Noto Sans CJK SC, sans-serif" fontWeight="300" fontSize="20" textAnchor="middle">
              <text x="669" y="205">A</text>
              <text x="501" y="270">A</text>
              <text x="484" y="468">A</text>
            </g>
            <text x="672" y="372" fill="#fff" fontFamily="Liberation Serif, serif" fontSize="57">A</text>
          </Drawing>
          <ViewControls><button>[−]</button><button>[俯视]</button><button>[二维线框]</button></ViewControls>
          <Palette>
            <PaletteBar>
              <Svg width="10" height="10" viewBox="0 0 10 10"><path d="M1 1l8 8M9 1L1 9" stroke="#d0d2d5" strokeWidth="2" /></Svg>
              <Svg width="10" height="10" viewBox="0 0 10 10"><path d="M1 0v10" stroke="#d0d2d5" /><path d="M2 2h2v6H2zM9 2v6L5 5z" fill="#d0d2d5" /></Svg>
              <Svg width="10" height="10" viewBox="0 0 10 10"><path d="M0 3h10M0 7h10M3 0v10M7 0v10M1 1l8 8M9 1L1 9" stroke="#d0d2d5" /><circle cx="5" cy="5" r="2" fill="#2e3541" /></Svg>
              <PaletteName>特性</PaletteName>
            </PaletteBar>
            <PaletteBody><PaletteInput aria-label="选择对象" /></PaletteBody>
          </Palette>
        </Canvas>
      </Work>

      <Dialog role="dialog" aria-labelledby="dlg">
        <DialogHead>
          <DialogLogo />
          <DialogTitle id="dlg">编辑块定义</DialogTitle>
          <IconButton aria-label="关闭">
            <Svg width="12" height="12" viewBox="0 0 12 12"><path d="M1 1l10 10M11 1L1 11" stroke="#000" /></Svg>
          </IconButton>
        </DialogHead>
        <DialogGrid>
          <Column>
            <FieldLabel htmlFor="blk">要创建或编辑的块<Latin>(B)</Latin></FieldLabel>
            <NameBox><NameInput id="blk" /><TextCursor /></NameBox>
            <BlockList size={9} aria-label="块列表">
              {blocks.map((b, i) => <BlockOption key={b} $first={i === 0}>{b}</BlockOption>)}
            </BlockList>
          </Column>
          <Frames>
            <Frame $h={130}><Legend>预览</Legend></Frame>
            <Frame $h={72}>
              <Legend>说明</Legend>
              <Hint>选择需要编辑的块</Hint>
              <Spin>
                <Svg width="8" height="5" viewBox="0 0 8 5"><path d="M0 5l4-4 4 4" stroke="#b8b8b8" strokeWidth="2" fill="none" /></Svg>
                <Svg width="8" height="5" viewBox="0 0 8 5"><path d="M0 0l4 4 4-4" stroke="#b8b8b8" strokeWidth="2" fill="none" /></Svg>
              </Spin>
            </Frame>
          </Frames>
        </DialogGrid>
        <Actions>
          <Action $primary>确定</Action>
          <Action>取消</Action>
          <Action>帮助<Latin>(H)</Latin></Action>
        </Actions>
      </Dialog>

      <Annotations fill="none" stroke={RED} aria-hidden="true">
        <path d="M302 55h61v94h-61z" strokeWidth="6" />
        <path d="M348 139L700 485" strokeWidth="7" strokeLinecap="round" />
        <path d="M697 464l9 16 5-4 16 34-33-17 4-5-17-7z" fill={RED} stroke="none" />
        <path d="M719 515h47v16h-47z" strokeWidth="5" />
        <path d="M774 533L861 667" strokeWidth="7" strokeLinecap="round" />
        <path d="M869 656l10 36-30-22z" fill={RED} stroke="none" />
      </Annotations>
      <Watermark>CSDN @山水CAD筑梦人</Watermark>
    </Shell>
  );
}
